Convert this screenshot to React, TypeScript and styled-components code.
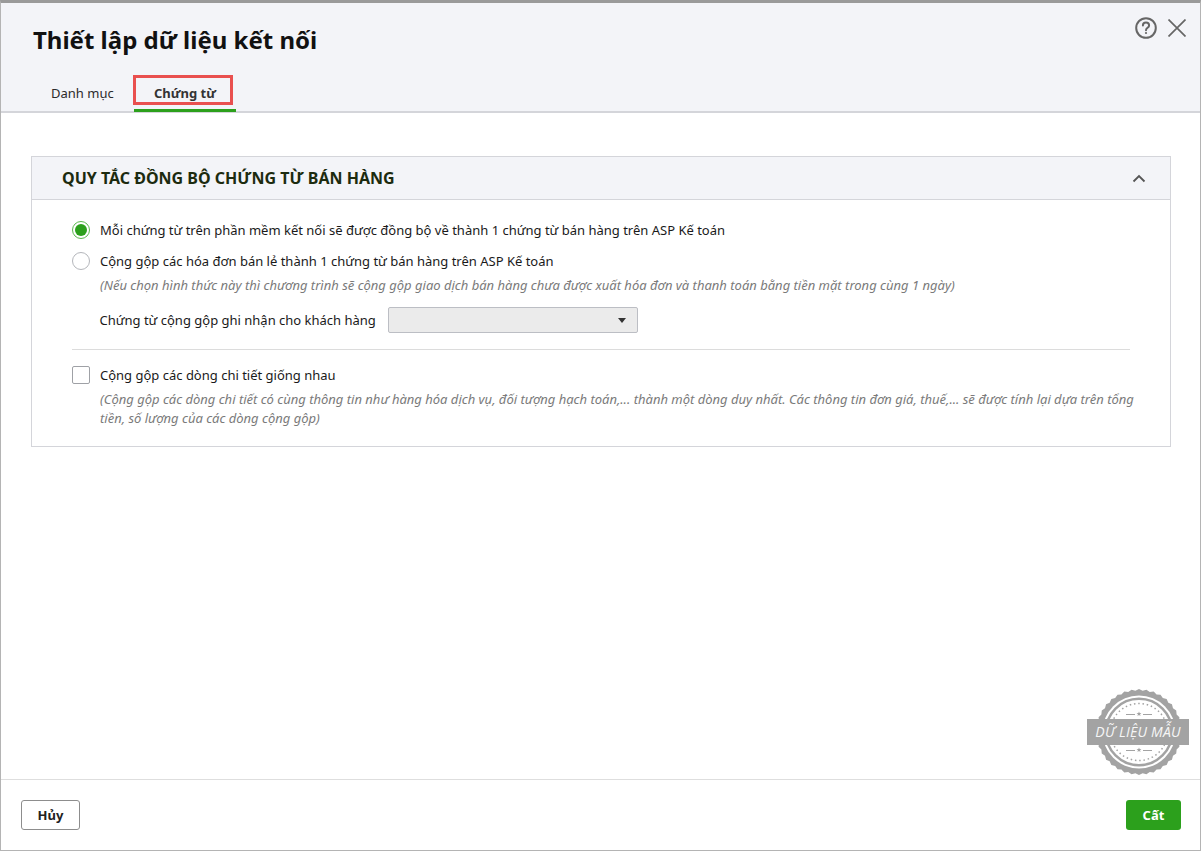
import React from "react";
import styled, { createGlobalStyle } from "styled-components";

const Global = createGlobalStyle`
  html, body { margin: 0; padding: 0; background: #fff; }
  body { font-family: "Noto Sans", "Liberation Sans", sans-serif; }
  * { box-sizing: border-box; }
`;

const Dialog = styled.div`
  position: relative;
  width: 1201px;
  height: 851px;
  display: flex;
  flex-direction: column;
  background: #fff;
  border-top: 3px solid #9a9a9a;
  border-left: 1px solid #b4b4b4;
  border-right: 1px solid #b4b4b4;
  border-bottom: 1px solid #b4b4b4;
  overflow: hidden;
`;

const Header = styled.header`
  position: relative;
  height: 110px;
  flex: none;
  background: #f3f4f8;
  border-bottom: 2px solid #d4d5da;
  display: flex;
  flex-direction: column;
`;

const Title = styled.h1`
  margin: 0;
  padding: 19px 0 0 32px;
  height: 73px;
  font-size: 24px;
  line-height: 36px;
  font-weight: 700;
  color: #111;
`;

const HeaderActions = styled.div`
  position: absolute;
  top: 14px;
  right: 14px;
  display: flex;
  align-items: center;
  gap: 11px;
`;

const Tabs = styled.nav`
  display: flex;
  padding-left: 32px;
  height: 35px;
`;

const Tab = styled.div<{ $active?: boolean }>`
  position: relative;
  display: flex;
  justify-content: ${(p) => (p.$active ? "center" : "flex-start")};
  width: ${(p) => (p.$active ? "102px" : "101px")};
  padding: 7px 0 0 ${(p) => (p.$active ? 0 : 18)}px;
  height: 36px;
  font-size: 13px;
  line-height: 20px;
  font-weight: ${(p) => (p.$active ? 700 : 400)};
  color: ${(p) => (p.$active ? "#333" : "#2b2b2b")};
  border-bottom: 3px solid ${(p) => (p.$active ? "#2ca01c" : "transparent")};
`;

const Highlight = styled.div`
  position: absolute;
  left: -1px;
  top: -1px;
  width: 100px;
  height: 30px;
  border: 3px solid #e9504f;
  pointer-events: none;
`;

const Content = styled.main`
  flex: 1;
  padding: 43px 29px 0 30px;
`;

const Card = styled.section`
  border: 1px solid #d4d5da;
  height: 291px;
`;

const CardHeader = styled.div`
  height: 43px;
  background: #f3f4f8;
  border-bottom: 1px solid #d4d5da;
  display: flex;
  align-items: center;
  justify-content: space-between;
  padding: 0 24px 0 30px;
`;

const CardTitle = styled.h2`
  margin: 0;
  font-size: 16px;
  line-height: 22px;
  font-weight: 700;
  color: #1c2b0f;
`;

const CardBody = styled.div`
  padding: 19px 40px 0 40px;
`;

const OptionRow = styled.div<{ $mt?: number }>`
  display: flex;
  align-items: center;
  gap: 10px;
  height: 22px;
  margin-top: ${(p) => p.$mt ?? 0}px;
  font-size: 13px;
  line-height: 20px;
  color: #1a1a1a;
`;

const Radio = styled.span<{ $checked?: boolean }>`
  width: 18px;
  height: 18px;
  flex: none;
  border-radius: 50%;
  background: #fff;
  border: 1px solid ${(p) => (p.$checked ? "#5cb84e" : "#b4b6bb")};
  display: flex;
  align-items: center;
  justify-content: center;
  &::after {
    content: "";
    display: ${(p) => (p.$checked ? "block" : "none")};
    width: 12px;
    height: 12px;
    border-radius: 50%;
    background: #2ca01c;
  }
`;

const Checkbox = styled.span`
  width: 18px;
  height: 18px;
  flex: none;
  background: #fff;
  border: 1px solid #9fa1a6;
  border-radius: 2px;
`;

const Note = styled.p<{ $mt?: number }>`
  margin: ${(p) => p.$mt ?? 0}px -10px 0 28px;
  font-size: 13px;
  line-height: 19px;
  font-style: italic;
  color: #7a7a7a;
`;

const FieldRow = styled.div`
  display: flex;
  align-items: center;
  margin: 12px 0 0 27.5px;
  gap: 12.5px;
  height: 26px;
  font-size: 13px;
  color: #1a1a1a;
`;

const Select = styled.div`
  width: 250px;
  height: 26px;
  background: #ebebeb;
  border: 1px solid #bcbec4;
  border-radius: 2px;
  display: flex;
  align-items: center;
  justify-content: flex-end;
  padding-right: 11px;
`;

const Caret = styled.span`
  width: 0;
  height: 0;
  border-left: 4px solid transparent;
  border-right: 4px solid transparent;
  border-top: 5px solid #333;
`;

const Divider = styled.hr`
  border: 0;
  border-top: 1px solid #dcdcdc;
  margin: 16px 0 0;
`;

const Footer = styled.footer`
  flex: none;
  height: 71px;
  border-top: 1px solid #dedede;
  display: flex;
  align-items: center;
  justify-content: space-between;
  padding: 0 19px 0 20px;
`;

const GhostButton = styled.button`
  width: 59px;
  height: 30px;
  background: #fff;
  border: 1px solid #8d8d8d;
  border-radius: 3px;
  font: 700 13px "Noto Sans", sans-serif;
  color: #222;
  padding: 0;
`;

const PrimaryButton = styled.button`
  width: 55px;
  height: 30px;
  background: #2ca01c;
  border: 0;
  border-radius: 3px;
  font: 700 13px "Noto Sans", sans-serif;
  color: #fff;
  padding: 0;
`;

const Stamp = styled.div`
  position: absolute;
  left: 1087px;
  top: 684px;
  width: 102px;
  height: 90px;
`;

const StampBanner = styled.div`
  position: absolute;
  left: -1px;
  top: 32px;
  width: 102px;
  height: 26px;
  background: #a3a3a3;
  color: #f6f6f6;
  font-size: 14px;
  line-height: 26px;
  font-style: italic;
  text-align: center;
  white-space: nowrap;
  letter-spacing: 0.2px;
  font-family: "Open Sans", "Noto Sans", sans-serif;
`;

function seal() {
  const pts: string[] = [];
  const n = 72;
  for (let i = 0; i < n; i++) {
    const a = (i / n) * Math.PI * 2;
    const r = i % 2 ? 41.5 : 43;
    pts.push(`${(51 + r * Math.cos(a)).toFixed(2)},${(45 + r * Math.sin(a)).toFixed(2)}`);
  }
  return pts.join(" ");
}

function starPoints(cx: number, cy: number, r: number) {
  const pts: string[] = [];
  for (let i = 0; i < 10; i++) {
    const a = -Math.PI / 2 + (i * Math.PI) / 5;
    const rr = i % 2 ? r * 0.42 : r;
    pts.push(`${(cx + rr * Math.cos(a)).toFixed(2)},${(cy + rr * Math.sin(a)).toFixed(2)}`);
  }
  return pts.join(" ");
}

const StampArt = () => (
  <svg width="102" height="90" viewBox="0 0 102 90">
    <polygon points={seal()} fill="#a3a3a3" />
    <circle cx="51" cy="45" r="36.5" fill="#fff" />
    <circle cx="51" cy="45" r="33.2" fill="none" stroke="#a3a3a3" strokeWidth="2.5" />
    <circle cx="51" cy="45" r="28.5" fill="none" stroke="#a3a3a3" strokeWidth="1.5" strokeDasharray="1.5 2.8" />
    <polygon points={starPoints(51, 27, 2.6)} fill="#a3a3a3" />
    <polygon points={starPoints(51, 63, 2.6)} fill="#a3a3a3" />
    <path d="M38 27.5h9M55 27.5h9M38 63.5h9M55 63.5h9" stroke="#a3a3a3" strokeWidth="1" />
  </svg>
);

export default function App() {
  return (
    <>
      <Global />
      <Dialog>
        <Header>
          <Title>Thiết lập dữ liệu kết nối</Title>
          <HeaderActions>
            <svg width="22" height="22" viewBox="0 0 22 22" fill="none" stroke="#666" strokeWidth="2">
              <circle cx="11" cy="11" r="9.8" />
              <path d="M7.9 8.6c0-1.9 1.4-3 3.1-3s3.1 1.1 3.1 2.8c0 2.4-3.1 2.4-3.1 4.8" strokeLinecap="round" />
              <circle cx="11" cy="16" r="1.1" fill="#666" stroke="none" />
            </svg>
            <svg width="18" height="18" viewBox="0 0 18 18" fill="none" stroke="#666" strokeWidth="1.7">
              <path d="M.5.5 17.5 17.5M17.5.5.5 17.5" />
            </svg>
          </HeaderActions>
          <Tabs>
            <Tab>Danh mục</Tab>
            <Tab $active>
              Chứng từ
              <Highlight />
            </Tab>
          </Tabs>
        </Header>
        <Content>
          <Card>
            <CardHeader>
              <CardTitle>QUY TẮC ĐỒNG BỘ CHỨNG TỪ BÁN HÀNG</CardTitle>
              <svg width="14" height="9" viewBox="0 0 14 9" fill="none" stroke="#555" strokeWidth="1.8">
                <path d="M1.5 7.5 7 2l5.5 5.5" />
              </svg>
            </CardHeader>
            <CardBody>
              <OptionRow>
                <Radio $checked />
                Mỗi chứng từ trên phần mềm kết nối sẽ được đồng bộ về thành 1 chứng từ bán hàng trên ASP Kế toán
              </OptionRow>
              <OptionRow $mt={9}>
                <Radio />
                Cộng gộp các hóa đơn bán lẻ thành 1 chứng từ bán hàng trên ASP Kế toán
              </OptionRow>
              <Note $mt={4}>
                (Nếu chọn hình thức này thì chương trình sẽ cộng gộp giao dịch bán hàng chưa được xuất hóa đơn và thanh toán bằng tiền mặt trong cùng 1 ngày)
              </Note>
              <FieldRow>
                Chứng từ cộng gộp ghi nhận cho khách hàng
                <Select>
                  <Caret />
                </Select>
              </FieldRow>
              <Divider />
              <OptionRow $mt={14}>
                <Checkbox />
                Cộng gộp các dòng chi tiết giống nhau
              </OptionRow>
              <Note $mt={4}>
                (Cộng gộp các dòng chi tiết có cùng thông tin như hàng hóa dịch vụ, đối tượng hạch toán,... thành một dòng duy nhất. Các thông tin đơn giá, thuế,... sẽ được tính lại dựa trên tổng tiền, số lượng của các dòng cộng gộp)
              </Note>
            </CardBody>
          </Card>
        </Content>
        <Footer>
          <GhostButton>Hủy</GhostButton>
          <PrimaryButton>Cất</PrimaryButton>
        </Footer>
        <Stamp>
          <StampArt />
          <StampBanner>DỮ LIỆU MẪU</StampBanner>
        </Stamp>
      </Dialog>
    </>
  );
}
